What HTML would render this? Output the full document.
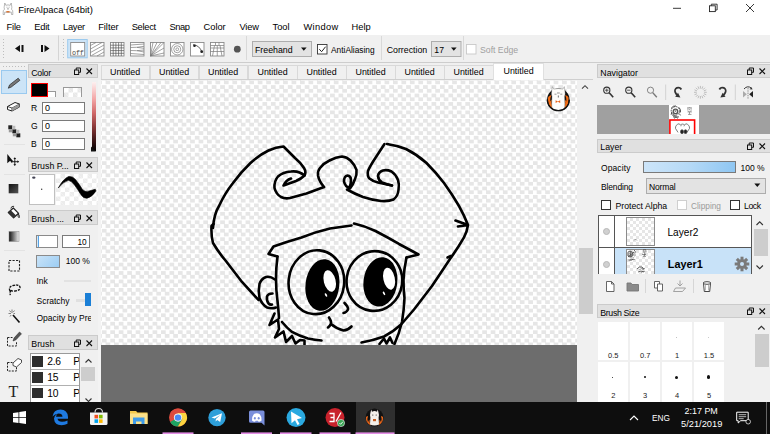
<!DOCTYPE html>
<html><head><meta charset="utf-8"><title>FireAlpaca</title>
<style>
*{box-sizing:border-box;margin:0;padding:0}
html,body{width:770px;height:434px;overflow:hidden;background:#f0f0f0}
body{position:relative;font-family:"Liberation Sans",sans-serif;font-size:8.7px;color:#000;line-height:1}
.a{position:absolute}
.t{position:absolute;white-space:nowrap;line-height:10px}
.hd{position:absolute;height:14.600px;background:#e0e0e0;border:1px solid #cbcbcb}
.inp{position:absolute;background:#fff;border:1px solid #7a7a7a}
.cb{position:absolute;width:10.300px;height:10.300px;background:#fff;border:1px solid #333}
svg{position:absolute;overflow:visible}
</style></head><body>
<!-- title bar -->
<div class="a" id="titlebar" style="left:0;top:0;width:770px;height:18px;background:#fff"></div>
<div class="t" style="left:18.300px;top:5px;font-size:9.450px">FireAlpaca (64bit)</div>
<!-- menu bar -->
<div class="a" id="menubar" style="left:0;top:18px;width:770px;height:16.5px;background:#fff"></div>
<div class="t" style="left:6.5px;top:22.400px;font-size:9.3px;letter-spacing:-0.18px">File</div>
<div class="t" style="left:34.3px;top:22.400px;font-size:9.3px;letter-spacing:-0.22px">Edit</div>
<div class="t" style="left:63.1px;top:22.400px;font-size:9.3px;letter-spacing:-0.3px">Layer</div>
<div class="t" style="left:98.2px;top:22.400px;font-size:9.3px;letter-spacing:-0.03px">Filter</div>
<div class="t" style="left:131.7px;top:22.400px;font-size:9.3px;letter-spacing:-0.28px">Select</div>
<div class="t" style="left:169.4px;top:22.400px;font-size:9.3px;letter-spacing:-0.37px">Snap</div>
<div class="t" style="left:203.5px;top:22.400px;font-size:9.3px;letter-spacing:0px">Color</div>
<div class="t" style="left:239.4px;top:22.400px;font-size:9.3px;letter-spacing:-0.15px">View</div>
<div class="t" style="left:272.6px;top:22.400px;font-size:9.3px;letter-spacing:-0.05px">Tool</div>
<div class="t" style="left:303.5px;top:22.400px;font-size:9.3px;letter-spacing:0.33px">Window</div>
<div class="t" style="left:351.6px;top:22.400px;font-size:9.3px;letter-spacing:-0.05px">Help</div>
<!-- toolbar -->
<div class="a" id="toolbar" style="left:0;top:34.500px;width:770px;height:28.300px;background:#f0f0f0;border-bottom:1px solid #cdcdcd"></div>

<!-- window controls -->
<svg style="left:0;top:0" width="770" height="18" viewBox="0 0 770 18">
 <g fill="none" stroke="#222" stroke-width="0.9">
  <path d="M673 8.300h8"/>
  <rect x="709.500" y="5.800" width="5.800" height="5.800"/><path d="M711.300 5.800v-1.600h5.800v5.800h-1.800"/>
  <path d="M746 4l8 8M754 4l-8 8"/>
 </g>
 <!-- app icon -->
 <g fill="#fff" stroke="#8a8a8a" stroke-width="0.600">
  <path d="M4.800 3l1 2.300q2.200-0.800 4.400 0l1-2.300l0.500 3.200q0.400 1.500-0.200 3l1.200 1.500l0.200 3.800h-1.400l-0.300-2.500q-3.200 1-6.400 0l-0.300 2.500h-1.400l0.200-3.800l1.200-1.500q-0.600-1.500-0.200-3z"/>
  <path d="M6.300 7.200h1.200M8.600 7.200h1.200M7.600 8.300h0.800v1h-0.800z" stroke="#777" stroke-width="0.450" fill="none"/>
 </g>
 <rect x="6.300" y="11" width="3.300" height="1.500" fill="#d9793a"/>
</svg>
<!-- toolbar content -->
<svg style="left:0;top:34px" width="770" height="28" viewBox="0 34 770 28">
 <g fill="#bdbdbd">
  <rect x="3" y="39" width="1" height="1"/><rect x="3" y="42" width="1" height="1"/><rect x="3" y="45" width="1" height="1"/><rect x="3" y="48" width="1" height="1"/><rect x="3" y="51" width="1" height="1"/><rect x="3" y="54" width="1" height="1"/><rect x="3" y="57" width="1" height="1"/>
  <rect x="63" y="39" width="1" height="1"/><rect x="63" y="42" width="1" height="1"/><rect x="63" y="45" width="1" height="1"/><rect x="63" y="48" width="1" height="1"/><rect x="63" y="51" width="1" height="1"/><rect x="63" y="54" width="1" height="1"/><rect x="63" y="57" width="1" height="1"/>
 </g>
 <path d="M58.500 35.500v25" stroke="#d4d4d4" fill="none"/>
 <!-- prev / next -->
 <path d="M15 48.500l5-3.500v7zM21.500 45h2v7h-2z" fill="#111"/>
 <path d="M49.500 48.500l-5-3.500v7zM41 45h2v7h-2z" fill="#111"/>
 <!-- snap off (selected) -->
 <rect x="67.700" y="39.500" width="19.500" height="18.300" fill="#cde4f7" stroke="#9ccaee"/>
 <rect x="70.700" y="42.500" width="14" height="13.500" fill="#fff" stroke="#8a8a8a" stroke-width="0.900"/>
 <text x="72" y="55" font-family="Liberation Mono, monospace" font-size="6.800" letter-spacing="-0.200" fill="#444">off</text>
 <g stroke="#7a7a7a" fill="none" stroke-width="0.700">
  <rect x="90.500" y="42.500" width="13.500" height="13.500" fill="#fff" stroke="#8a8a8a" stroke-width="0.900"/>
  <path d="M90.500 45.500l5.500-3M90.500 49l11.500-6.500M90.500 52.500l13.500-7.500M91.500 55.500l12.500-7M97 56l7-4"/>
  <rect x="110.500" y="42.500" width="13.500" height="13.500" fill="#fff" stroke="#8a8a8a" stroke-width="0.900"/>
  <path d="M113.200 42.500v13.500M115.900 42.500v13.500M118.600 42.500v13.500M121.300 42.500v13.500M110.500 45.200h13.500M110.500 47.900h13.500M110.500 50.600h13.500M110.500 53.300h13.500" stroke="#555"/>
  <rect x="130.500" y="42.500" width="13.500" height="13.500" fill="#fff" stroke="#8a8a8a" stroke-width="0.900"/>
  <path d="M130.500 45l13.500-1M130.500 47.500l6-0.200l7.500 1M130.500 50.500l6 0.200l7.500-0.700M130.500 53.500l13.500 1M137 47.300l7-1M137 50.700l7 1.300"/>
  <rect x="150.500" y="42.500" width="13.500" height="13.500" fill="#fff" stroke="#8a8a8a" stroke-width="0.900"/>
  <path d="M150.500 56l2.500-13.500M150.500 56l6.500-13.500M150.500 56l13.500-13.500M150.500 56l13.500-8M150.500 56l13.500-3M150.500 56l10.500-13.500"/>
  <rect x="170.500" y="42.500" width="13.500" height="13.500" fill="#fff" stroke="#8a8a8a" stroke-width="0.900"/>
  <circle cx="177.250" cy="49.250" r="5.700"/><circle cx="177.250" cy="49.250" r="3.500"/><circle cx="177.250" cy="49.250" r="1.400"/>
  <rect x="190.500" y="42.500" width="13.500" height="13.500" fill="#fff" stroke="#8a8a8a" stroke-width="0.900"/>
  <path d="M193 44.700q6.500 0.500 9 7.500" stroke="#222" stroke-width="0.700"/>
  <rect x="210.500" y="42.500" width="13.500" height="13.500" fill="#fff" stroke="#8a8a8a" stroke-width="0.900"/>
  <path d="M210.500 45.500h13.500M210.500 48h13.500M210.500 51.500h13.500M214.500 45.500l-2 10.500M217.250 45.500v10.500M220 45.500l2 10.500M215.500 42.500v3M219 42.500v3"/>
 </g>
 <circle cx="194.500" cy="45.700" r="1.300" fill="#222"/><circle cx="201.700" cy="51.700" r="1.400" fill="#222"/>
 <circle cx="237.300" cy="49.200" r="3.400" fill="#555"/>
 <path d="M246.500 36v24M381.500 36v24M463.500 36v24" stroke="#d9d9d9" fill="none"/>
 <!-- freehand combo -->
 <rect x="252.500" y="41.500" width="59" height="15" fill="#e3e3e3" stroke="#adadad"/>
 <path d="M301 47.500h5.600l-2.800 3.200z" fill="#111"/>
 <!-- AA checkbox -->
 <rect x="317.500" y="44.500" width="9.500" height="9.500" fill="#fff" stroke="#333" stroke-width="0.9"/>
 <path d="M319.300 49.200l2.300 2.500l4-5" stroke="#222" stroke-width="1" fill="none"/>
 <!-- correction combo -->
 <rect x="431.500" y="41.500" width="29.500" height="15" fill="#e3e3e3" stroke="#adadad"/>
 <path d="M451 47.500h5.600l-2.800 3.200z" fill="#111"/>
 <rect x="466.500" y="44.500" width="9.500" height="9.500" fill="#fff" stroke="#c8c8c8" stroke-width="0.9"/>
</svg>
<div class="t" style="left:255px;top:44.700px;font-size:8.8px">Freehand</div>
<div class="t" style="left:331px;top:45.200px;font-size:8.350px">AntiAliasing</div>
<div class="t" style="left:386.700px;top:45px;font-size:8.8px">Correction</div>
<div class="t" style="left:434.300px;top:45px;font-size:8.7px">17</div>
<div class="t" style="left:480px;top:44.700px;font-size:8.7px;color:#a0a0a0">Soft Edge</div>
<!-- TOOLBAR-CONTENT -->

<svg style="left:0;top:62px" width="29" height="345" viewBox="0 62 29 345">
 <g fill="#bdbdbd"><rect x="3" y="66" width="1" height="1"/><rect x="6" y="66" width="1" height="1"/><rect x="9" y="66" width="1" height="1"/><rect x="12" y="66" width="1" height="1"/><rect x="15" y="66" width="1" height="1"/><rect x="18" y="66" width="1" height="1"/><rect x="21" y="66" width="1" height="1"/><rect x="24" y="66" width="1" height="1"/></g>
 <rect x="1.500" y="70.500" width="25" height="23" fill="#cce4f7" stroke="#99c9ef"/>
 <!-- pencil -->
 <path d="M8.300 88.200l1.300-3.300l8.600-6.700l1.700 2.100l-8.600 6.700z" fill="#777" stroke="#222" stroke-width="0.700" stroke-linejoin="round"/>
 <!-- eraser -->
 <path d="M7.500 106.500l7.500-4l4.500 1.500v3l-7.500 4l-4.500-1.500z" fill="#fff" stroke="#222" stroke-width="1"/>
 <path d="M7.500 106.500l4.500 1.500l7.500-4M12 108v3" fill="none" stroke="#222" stroke-width="0.800"/><path d="M12 108l7.500-4v3l-7.500 4z" fill="#999"/>
 <!-- dot tool -->
 <g fill="#222"><rect x="8.300" y="125.300" width="4" height="4"/><rect x="12.300" y="129.300" width="4" height="4"/><rect x="16.300" y="133.300" width="4" height="4"/><rect x="12.300" y="125.800" width="3" height="3.500" fill="#bbb"/><rect x="16.300" y="129.800" width="3" height="3.500" fill="#bbb"/><rect x="8.800" y="129.300" width="3.500" height="3" fill="#999"/><rect x="12.800" y="133.300" width="3.500" height="3" fill="#999"/></g>
 <path d="M4 144.500h21M4 174.500h21M4 250.500h21" stroke="#e3e3e3" fill="none"/>
 <!-- move -->
 <path d="M7.300 154v9.300l2.600-2.200l3.400 0.400z" fill="#111"/>
 <path d="M14.800 158.500v6.500M11.500 161.700h6.600" stroke="#111" stroke-width="0.900" fill="none"/>
 <path d="M14.800 157.300l1.400 1.800h-2.800zM14.800 166.100l1.400-1.800h-2.800zM10.400 161.700l1.800-1.400v2.800zM19.200 161.700l-1.800-1.400v2.800z" fill="#111"/>
 <!-- fill rect -->
 <defs><linearGradient id="g1" x1="0" y1="0" x2="1" y2="1"><stop offset="0" stop-color="#111"/><stop offset="1" stop-color="#555"/></linearGradient>
 <linearGradient id="g2" x1="0" y1="0" x2="1" y2="0"><stop offset="0" stop-color="#111"/><stop offset="1" stop-color="#eee"/></linearGradient></defs>
 <rect x="8.700" y="184" width="9.600" height="9.300" fill="url(#g1)"/>
 <!-- bucket -->
 <path d="M8.300 212.500l5-4.500l5.300 5.300l-5 4.500z" fill="#fff" stroke="#222" stroke-width="1.200" stroke-linejoin="round"/><path d="M8.300 212.500l5.300 5.300l2.500-2.300l-5.300-5.300z" fill="#333"/>
 <path d="M10.800 208.500q0.500-2.800 3.300-2.200M18.300 213.800q1.800 2 0.800 4q-1.800-1-0.800-4z" fill="none" stroke="#222" stroke-width="0.900"/>
 <!-- gradient -->
 <rect x="9" y="231.500" width="10" height="10" fill="url(#g2)" stroke="#888" stroke-width="0.500"/>
 <!-- select rect -->
 <rect x="9" y="260.500" width="10.500" height="10.500" fill="none" stroke="#222" stroke-width="1.100" stroke-dasharray="2.200 1.300"/>
 <!-- lasso -->
 <path d="M10 291q-2-4 3-5.500q6-1.500 7 1.500q0.500 3.500-5 4q-3 0.500-4.500-1M11 290.500q-2 2.500-0.500 4.500" fill="none" stroke="#111" stroke-width="1.300" stroke-dasharray="2.400 1"/>
 <!-- wand -->
 <path d="M13 315l6.500 7.500" stroke="#111" stroke-width="1.600" fill="none"/>
 <path d="M12 309.500v3.500M8.500 313.500h2.500M15 313.500h-1.500M9.500 310.500l1.500 1.800M14.500 310.500l-1.300 1.600M10 316.500l1.200-1.500" stroke="#666" stroke-width="0.800" fill="none"/>
 <!-- select pen -->
 <path d="M7.500 337.500h5M7.500 337.500v8.500h9v-4" fill="none" stroke="#222" stroke-width="1" stroke-dasharray="2 1.200"/>
 <path d="M13 341l1-3l5.500-6l2 1.800l-5.500 6z" fill="#555" stroke="#222" stroke-width="0.500"/>
 <!-- select eraser -->
 <path d="M7.500 362.500h5M7.500 362.500v8.500h9v-4" fill="none" stroke="#222" stroke-width="1" stroke-dasharray="2 1.200"/>
 <path d="M13 363l5-4.500l3.500 1.500v2.500l-5 4.500l-3.500-1.500z" fill="#fff" stroke="#222" stroke-width="0.800"/>
 <text x="8.500" y="396.800" font-family="Liberation Serif, serif" font-size="16" fill="#222">T</text>
</svg>
<!-- LEFT-TOOLS -->
<div class="hd" style="left:28.300px;top:63.8px;width:69.600px"></div>
<div class="t" style="left:31.300px;top:67.5px;font-size:8.8px;letter-spacing:-0.3px">Color</div>
<svg style="left:74px;top:67.2px" width="20" height="9" viewBox="0 0 20 9"><g fill="none" stroke="#111" stroke-width="1"><rect x="0.500" y="3" width="4.200" height="4.500"/><path d="M2.200 3v-2h4.300v4.300h-1.800"/><path d="M12.500 1.500l5.500 5.500M18 1.500l-5.500 5.500" stroke-width="1.100"/></g></svg>

<div class="a" style="left:48px;top:90.500px;width:7.500px;height:6.500px;background:#fff;border:1px solid #999;border-left:0;border-bottom:0"></div>
<div class="a" style="left:31px;top:83.300px;width:17.300px;height:13.500px;background:#000;border:1.300px solid #f00"></div>
<div class="a" style="left:63px;top:86.500px;width:18.500px;height:10.500px;border:1px solid #999;border-bottom:0;background:#fff;background-image:linear-gradient(45deg,#e8e8e8 25%,transparent 25%,transparent 75%,#e8e8e8 75%),linear-gradient(45deg,#e8e8e8 25%,transparent 25%,transparent 75%,#e8e8e8 75%);background-size:9px 9px;background-position:0 0,4.500px 4.500px"></div>
<div class="a" style="left:91.500px;top:82px;width:4.500px;height:69px;background:linear-gradient(#fdf0f0 0%,#f3a5a5 25%,#d06868 45%,#8a3838 65%,#3a1515 85%,#000 100%)"></div>
<svg style="left:90px;top:146px" width="7" height="6" viewBox="0 0 7 6"><path d="M1 0.500v5h5z" fill="#111"/></svg>
<div class="t" style="left:31px;top:103px;font-size:8.600px">R</div>
<div class="t" style="left:31px;top:120.500px;font-size:8.600px">G</div>
<div class="t" style="left:31px;top:138.500px;font-size:8.600px">B</div>
<div class="inp" style="left:41.500px;top:102px;width:43.500px;height:12px"></div>
<div class="inp" style="left:41.500px;top:119.500px;width:43.500px;height:12px"></div>
<div class="inp" style="left:41.500px;top:137.500px;width:43.500px;height:12px"></div>
<div class="t" style="left:45px;top:103px;font-size:9px">0</div>
<div class="t" style="left:45px;top:120.500px;font-size:9px">0</div>
<div class="t" style="left:45px;top:138.500px;font-size:9px">0</div>
<div class="hd" style="left:28.300px;top:157.2px;width:69.600px"></div>
<div class="t" style="left:31.300px;top:160.9px;font-size:8.8px">Brush P...</div>
<svg style="left:74px;top:160.6px" width="20" height="9" viewBox="0 0 20 9"><g fill="none" stroke="#111" stroke-width="1"><rect x="0.500" y="3" width="4.200" height="4.500"/><path d="M2.200 3v-2h4.300v4.300h-1.800"/><path d="M12.500 1.500l5.500 5.500M18 1.500l-5.500 5.500" stroke-width="1.100"/></g></svg>

<div class="a" style="left:29px;top:173.500px;width:26px;height:31.500px;background:#fff;border:1px solid #c0c0c0"></div>
<div class="a" style="left:56px;top:173.500px;width:41.500px;height:31.500px;background:#fff;background-image:linear-gradient(45deg,#ececec 25%,transparent 25%,transparent 75%,#ececec 75%),linear-gradient(45deg,#ececec 25%,transparent 25%,transparent 75%,#ececec 75%);background-size:9px 9px;background-position:0 0,4.500px 4.500px"></div>
<svg style="left:29px;top:173px;overflow:hidden" width="69" height="33" viewBox="29 173 69 33">
 <ellipse cx="33.800" cy="177.600" rx="1.700" ry="1.200" fill="#445"/><circle cx="41.700" cy="189.300" r="0.700" fill="#333"/>
 <path d="M58.300 188Q63 179 68.500 176.500Q72.500 175.800 75.500 179.500Q79.500 184.500 82.500 189.500Q85 192.500 89 191L95.200 189.300Q96.300 189.800 95.700 191.500Q92 197 87 198.300Q83.500 198.500 81 194.800Q77.500 189 74.500 185Q71.500 181 68.500 180.300Q63.500 181.500 58.300 188z" fill="#000" stroke="#000" stroke-width="0.600" stroke-linejoin="round"/>
</svg>
<div class="hd" style="left:28.300px;top:210.2px;width:69.600px"></div>
<div class="t" style="left:31.300px;top:213.9px;font-size:8.8px">Brush ...</div>
<svg style="left:74px;top:213.6px" width="20" height="9" viewBox="0 0 20 9"><g fill="none" stroke="#111" stroke-width="1"><rect x="0.500" y="3" width="4.200" height="4.500"/><path d="M2.200 3v-2h4.300v4.300h-1.800"/><path d="M12.500 1.500l5.500 5.500M18 1.500l-5.500 5.500" stroke-width="1.100"/></g></svg>

<div class="a" style="left:35.500px;top:235.200px;width:22.500px;height:12.800px;background:#fff;border:1px solid #8a8a8a"></div>
<div class="a" style="left:36.500px;top:236.200px;width:2.800px;height:10.800px;background:linear-gradient(90deg,#d5e9fa 60%,#55a3e6 60%)"></div>
<div class="inp" style="left:62.200px;top:235.200px;width:28px;height:12.800px"></div>
<div class="t" style="left:77.500px;top:237px;font-size:8.300px">10</div>
<div class="a" style="left:35.500px;top:255px;width:24.700px;height:12.800px;background:linear-gradient(135deg,#c9e3f8,#9ccdf3);border:1px solid #8a8a8a"></div>
<div class="t" style="left:65.800px;top:255.700px;font-size:8.500px">100 %</div>
<div class="t" style="left:36.500px;top:276px;font-size:8.500px">Ink</div>
<div class="a" style="left:63.500px;top:280px;width:27px;height:1.500px;background:#e2e2e2"></div>
<div class="t" style="left:36.500px;top:296px;font-size:8.500px">Scratchy</div>
<div class="a" style="left:75.500px;top:299px;width:9.500px;height:2.500px;background:#e0e0e0"></div>
<div class="a" style="left:84.500px;top:292.500px;width:6px;height:13.500px;background:#1a7fd6"></div>
<div class="a" style="left:36.500px;top:312.500px;width:54px;height:12px;overflow:hidden"><div class="t" style="left:0;top:0;font-size:8.500px">Opacity by Pressure</div></div>
<div class="hd" style="left:28.300px;top:335.1px;width:69.600px"></div>
<div class="t" style="left:31.300px;top:338.8px;font-size:8.8px">Brush</div>
<svg style="left:74px;top:338.5px" width="20" height="9" viewBox="0 0 20 9"><g fill="none" stroke="#111" stroke-width="1"><rect x="0.500" y="3" width="4.200" height="4.500"/><path d="M2.200 3v-2h4.300v4.300h-1.800"/><path d="M12.500 1.500l5.500 5.500M18 1.500l-5.500 5.500" stroke-width="1.100"/></g></svg>

<div class="a" style="left:29.700px;top:352.500px;width:50.200px;height:50px;background:#fff;border:1px solid #9a9a9a;border-bottom:0"></div>
<div class="a" style="left:30.700px;top:369px;width:48.200px;height:1px;background:#b0b0b0"></div>
<div class="a" style="left:30.700px;top:385px;width:48.200px;height:1px;background:#b0b0b0"></div>
<div class="a" style="left:32.200px;top:356.200px;width:10.600px;height:10.600px;background:#2e2e2e"></div>
<div class="a" style="left:32.200px;top:372px;width:10.600px;height:10.600px;background:#2e2e2e"></div>
<div class="a" style="left:32.200px;top:387.800px;width:10.600px;height:10.600px;background:#2e2e2e"></div>
<div class="t" style="left:47.300px;top:357.300px;font-size:10.300px;letter-spacing:-0.3px">2.6</div>
<div class="t" style="left:47.300px;top:373.100px;font-size:10.300px;letter-spacing:-0.3px">15</div>
<div class="t" style="left:47.300px;top:388.900px;font-size:10.300px;letter-spacing:-0.3px">10</div>
<div class="a" style="left:72px;top:353.500px;width:7px;height:49px;overflow:hidden"><div class="t" style="left:1.300px;top:3.800px;font-size:10.300px">Pe</div><div class="t" style="left:1.300px;top:19.600px;font-size:10.300px">Pe</div><div class="t" style="left:1.300px;top:35.400px;font-size:10.300px">Pe</div></div>
<div class="a" style="left:80.800px;top:367.300px;width:14.300px;height:14.200px;background:#cdcdcd"></div>
<svg style="left:80px;top:353px" width="18" height="54" viewBox="80 353 18 54"><g fill="none" stroke="#333" stroke-width="1.100"><path d="M85.500 362.500l3-3l3 3"/><path d="M85.500 398.500l3 3l3-3"/></g></svg>
<!-- LEFT-PANELS -->
<div class="a" style="left:100.5px;top:64.500px;width:49.500px;height:16px;background:#f0f0f0;border:1px solid #d9d9d9;border-bottom:0"></div><div class="t" style="left:110.0px;top:66.800px;font-size:8.900px">Untitled</div>
<div class="a" style="left:149.5px;top:64.500px;width:49.500px;height:16px;background:#f0f0f0;border:1px solid #d9d9d9;border-bottom:0"></div><div class="t" style="left:159.0px;top:66.800px;font-size:8.900px">Untitled</div>
<div class="a" style="left:198.5px;top:64.500px;width:49.500px;height:16px;background:#f0f0f0;border:1px solid #d9d9d9;border-bottom:0"></div><div class="t" style="left:208.0px;top:66.800px;font-size:8.900px">Untitled</div>
<div class="a" style="left:248px;top:64.500px;width:49.500px;height:16px;background:#f0f0f0;border:1px solid #d9d9d9;border-bottom:0"></div><div class="t" style="left:257.5px;top:66.800px;font-size:8.900px">Untitled</div>
<div class="a" style="left:297px;top:64.500px;width:49.500px;height:16px;background:#f0f0f0;border:1px solid #d9d9d9;border-bottom:0"></div><div class="t" style="left:306.5px;top:66.800px;font-size:8.900px">Untitled</div>
<div class="a" style="left:346px;top:64.500px;width:49.500px;height:16px;background:#f0f0f0;border:1px solid #d9d9d9;border-bottom:0"></div><div class="t" style="left:355.5px;top:66.800px;font-size:8.900px">Untitled</div>
<div class="a" style="left:395px;top:64.500px;width:49.500px;height:16px;background:#f0f0f0;border:1px solid #d9d9d9;border-bottom:0"></div><div class="t" style="left:404.5px;top:66.800px;font-size:8.900px">Untitled</div>
<div class="a" style="left:444px;top:64.500px;width:49.500px;height:16px;background:#f0f0f0;border:1px solid #d9d9d9;border-bottom:0"></div><div class="t" style="left:453.5px;top:66.800px;font-size:8.900px">Untitled</div>
<div class="a" style="left:101px;top:78.800px;width:492px;height:1.300px;background:#cfcfcf"></div>
<div class="a" style="left:493px;top:63px;width:51px;height:18px;background:#fff;border:1px solid #e0e0e0;border-bottom:0"></div><div class="t" style="left:503.500px;top:66px;font-size:8.900px">Untitled</div>
<!-- TABS -->

<div class="a" style="left:97.500px;top:80px;width:4px;height:323px;background:#f3f3f3"></div>
<div class="a" id="canvas" style="left:101px;top:80.300px;width:476.600px;height:265px;overflow:hidden;background:#f5f5f5"><div class="a" style="left:-8.460px;top:-8.460px;width:500px;height:290px;filter:blur(0.700px);background:repeating-conic-gradient(#e6e6e6 0% 25%,#ffffff 0% 50%) 0.400px 0/8.460px 8.460px"></div></div>
<div class="a" style="left:101px;top:345.200px;width:476.600px;height:57.500px;background:#6d6d6d"></div>
<svg style="left:98px;top:81px;overflow:hidden" width="480" height="264.200" viewBox="98 81 480 264.200">
<g fill="none" stroke="#000" stroke-width="2.600" stroke-linecap="round" stroke-linejoin="round">

<!-- hat left outline + curl -->
<path d="M213.500 224L211.500 226Q211 236 213 243Q219 253 225.500 260.500L242 282L258.500 300"/>
<path d="M213 228Q214 214 219 206Q225 193 233 183Q241 172 250.500 163Q259 155 268.500 150.500Q276 147 283.500 146.500L295 158Q301 163 304 168Q306.500 172 304.500 175.500Q301 179 296 181L283.500 185.500Q286 180 291 178.500"/>
<path d="M304.500 175.500Q299 170.500 291 171.500Q283 172 278 176.500Q274 181 274.500 188Q276 194 281 197Q285 199 290 198L306.500 193.500L324 187"/>
<path d="M324 187Q319 181 318 175.500Q317.500 171 320 168Q324 163 329.500 160.500Q336 157 342 156.500Q347 157 350.500 160.500Q355 165 356.500 170Q357 175 355 179Q353 185 350 188.500Q345 186.500 344 181.500Q344 176 347.500 175.500Q351 176 351 180Q351 185 349 188.500"/>
<path d="M347 189.500Q355 194 363 197Q372 200 381 201Q389 201.500 393.500 199.500Q398 196 398.500 190Q399.500 184 398 180Q396 174.500 391.500 171.500Q387 169.500 383 170.500Q378.500 172 378 176Q378.500 180.500 382 182.500Q387 184.500 392 185.500"/>
<path d="M384.500 144L376 157Q370 166 368 171Q367 176 369.500 178.500Q373 181.500 378 182.500L392 185.500"/>
<path d="M387 144Q397 145.500 406 149Q417 154.500 426.500 163Q436 172.500 444 183Q452 194 459 206Q464 215 468 225L455.500 220.500M468 225L458 226.500M468 225Q467 232 464 237.500Q458 248 450 259L432 286L414 309.500L402 323.500"/>
<path d="M447.500 257.500l3.500-1.500"/>
<!-- brim -->
<path d="M351.500 225.500L330 228.500Q315 232 301.500 237.500Q286 242 273.500 246.500L268.500 254L277.500 256.500"/>
<path d="M354 223.500Q365 226 375.500 231Q388 237.500 399 244L418.500 254.500L406.500 257.500"/>
<!-- face sides -->
<path d="M277.500 256.500Q276 268 276 278.500Q276 290 277.500 301Q278.500 310 279 318"/>
<path d="M406.500 257.500Q404 269 403.500 280Q403.500 290 404.500 298Q404 310 402 322Q399 334 394.500 344"/>
<!-- ear -->
<path d="M275 279.500Q270 276 266 277Q261 279 259.500 284Q258 291 259.500 298Q262 304.500 267 307.500Q272 309 276 307.500"/>
<path d="M272.500 293.500Q268 293.500 267 296.500Q266.500 301 268.500 303.500Q270 305 272 304.500"/>
<!-- hair zigzag -->
<path d="M274.500 313.500L269.500 325L278 319.500L279 329L275 337.500L283.500 331.500L286 342L292 336L295.500 343.500L300 340L304.500 340.500L304.500 345"/>
<path d="M282 322Q287 328 292 332Q299 336 308 338.500Q315 340 321.500 340.500"/>
<!-- jaw right -->
<path d="M361.500 342.500Q373 340.500 384 336.500Q393 332 400.500 325"/>
<path d="M379.500 344L384 338.500L386.500 343.500L390 337.500L392.500 343"/>
<!-- eyes -->
<ellipse cx="316.400" cy="282.200" rx="27.800" ry="32" transform="rotate(6 316.400 282.200)"/>
<ellipse cx="374.400" cy="281" rx="27.800" ry="29.900" transform="rotate(8 374.400 281)"/>
<ellipse cx="322.400" cy="285" rx="15.600" ry="24.600" transform="rotate(7 322.400 285)" fill="#000"/>
<ellipse cx="380.400" cy="281.900" rx="15.600" ry="23.500" transform="rotate(7 380.400 281.900)" fill="#000"/>
<ellipse cx="329.700" cy="281" rx="5.900" ry="11" transform="rotate(-14 329.700 281)" fill="#fff" stroke="none"/>
<ellipse cx="389.100" cy="278.700" rx="5.700" ry="11.200" transform="rotate(-12 389.100 278.700)" fill="#fff" stroke="none"/>
<ellipse cx="326" cy="295" rx="0.900" ry="2" transform="rotate(-30 326 295)" fill="#fff" stroke="none"/>
<ellipse cx="384" cy="293.400" rx="0.900" ry="2" transform="rotate(-30 384 293.400)" fill="#fff" stroke="none"/>
<!-- nose + smile -->
<path d="M344.500 303Q348.500 307 348 309.500Q346.500 312.500 343.500 313"/>
<path d="M329 317.500Q331.500 321 331 323.500Q330 326 328 327.500M331 324Q336 328.500 343.500 330.500Q348 330 351.500 326.500"/>
<!-- DRAWING -->
</g>
</svg>

<svg style="left:545px;top:85px" width="27" height="28" viewBox="545 85 27 28">
 <circle cx="558.300" cy="99.700" r="11.300" fill="#111"/>
 <path d="M548.200 97q-1 5 1.800 9.500q2 3 5.200 4q-2-3.500-1.800-7.500q-1 1-1.200 2.500q-1.300-3-0.300-6q-1 0.800-1.700 2q-0.300-3.500 1.300-6.500q-2 0.500-3.300 2zM568.400 97q1 5-1.800 9.500q-2 3-5.200 4q2-3.500 1.800-7.500q1 1 1.200 2.500q1.300-3 0.300-6q1 0.800 1.700 2q0.300-3.500-1.300-6.500q2 0.500 3.300 2z" fill="#f26c14"/>
 <path d="M552.300 86.600l1.400 2.500q4.600-1.200 9.200 0l1.400-2.500l0.600 4.400q0.700 2.500-0.300 5.500l0.300 7q0.300 4-1.200 6.400q-5.400 1.800-10.800 0q-1.500-2.400-1.200-6.400l0.300-7q-1-3-0.300-5.500z" fill="#fdfdfb" stroke="#555" stroke-width="0.350"/>
 <circle cx="558.300" cy="99.700" r="11" fill="none" stroke="#111" stroke-width="1.300" stroke-dasharray="34.5 34.7"/>
 <path d="M554.500 94.200h2M560.300 94.200h2M557 93l2.800 0" stroke="#333" stroke-width="0.500" fill="none"/>
 <path d="M557.800 95.500h1.200v2h-1.200z" fill="#888"/>
 <path d="M555.600 100.200l2.300 1.200l2.300-1.200v2.800l-2.300-1.200l-2.300 1.200z" fill="#e8641a"/>
</svg>
<!-- canvas scrollbar -->
<div class="a" style="left:577.300px;top:80px;width:16px;height:323px;background:#f0f0f0"></div>
<div class="a" style="left:579px;top:247.700px;width:13.500px;height:66.800px;background:#cdcdcd"></div>
<svg style="left:578px;top:81px" width="15" height="15" viewBox="578 81 15 15"><path d="M582 88.700l3-3l3 3" fill="none" stroke="#444" stroke-width="1.100"/></svg>
<!-- CANVAS -->
<div class="hd" style="left:597px;top:63.8px;width:173.5px"></div>
<div class="t" style="left:600.300px;top:67.5px;font-size:8.8px">Navigator</div>
<svg style="left:746.6px;top:67.2px" width="20" height="9" viewBox="0 0 20 9"><g fill="none" stroke="#111" stroke-width="1"><rect x="0.500" y="3" width="4.200" height="4.500"/><path d="M2.200 3v-2h4.300v4.300h-1.800"/><path d="M12.500 1.500l5.500 5.500M18 1.500l-5.500 5.500" stroke-width="1.100"/></g></svg>

<svg style="left:597px;top:80px" width="173" height="26" viewBox="597 80 173 26">
 <g fill="none" stroke="#333" stroke-width="1.100">
  <circle cx="606.800" cy="90.200" r="3.100"/><path d="M609.200 92.800l4 4.500" stroke-width="1.600"/><path d="M605.100 90.200h3.400M606.800 88.500v3.400" stroke-width="0.800"/>
  <circle cx="628.800" cy="90.200" r="3.100"/><path d="M631.200 92.800l4 4.500" stroke-width="1.600"/><path d="M627.100 90.200h3.400" stroke-width="0.800"/>
  <circle cx="650.500" cy="90.200" r="3.100" stroke="#777" stroke-width="0.900"/><path d="M652.800 92.800l4 4.500" stroke-width="1.300" stroke="#777"/>
  <path d="M665.700 84.500v15.500M735.300 84.500v15.500" stroke="#d2d2d2" stroke-width="1"/>
  <path d="M681.300 89.500a3.300 3.300 0 0 0 -6 2.800q0.800 2 2.500 3" stroke-width="1.800"/>
  <path d="M675.200 96.700l5.200 0.800l-2.400-4.800z" fill="#333" stroke="none"/>
  <path d="M719.400 89.500a3.300 3.300 0 0 1 6 2.800q-0.800 2 -2.500 3" stroke-width="1.800"/>
  <path d="M725.500 96.700l-5.200 0.800l2.400-4.800z" fill="#333" stroke="none"/>
 </g>
 <path d="M704.10 92.30L706.80 92.30M703.82 93.72L706.31 94.75M703.02 94.92L704.93 96.83M701.82 95.72L702.85 98.21M700.40 96.00L700.40 98.70M698.98 95.72L697.95 98.21M697.78 94.92L695.87 96.83M696.98 93.72L694.49 94.75M696.70 92.30L694.00 92.30M696.98 90.88L694.49 89.85M697.78 89.68L695.87 87.77M698.98 88.88L697.95 86.39M700.40 88.60L700.40 85.90M701.82 88.88L702.85 86.39M703.02 89.68L704.93 87.77M703.82 90.88L706.31 89.85" stroke="#b0b0b0" stroke-width="0.800" fill="none"/>
 <path d="M743 91v6.500l3.800-3.250z" fill="#aaa"/><path d="M753 91v6.500l-3.800-3.250z" fill="#222"/>
 <path d="M748 88v11" stroke="#666" stroke-width="0.700" stroke-dasharray="1.400 0.900" fill="none"/>
 <path d="M744 89q3.500-4 7.500-0.800" stroke="#333" stroke-width="1" fill="none"/><path d="M752.500 89.500l-3-0.300l2.200-2z" fill="#333"/>
</svg>
<div class="a" style="left:597.200px;top:104.600px;width:172.800px;height:29px;background:#a0a0a0"></div>
<div class="a" style="left:668.900px;top:104.600px;width:30px;height:29px;background:#fff"></div>
<svg style="left:668px;top:104.600px;overflow:hidden" width="32" height="29" viewBox="668 104.600 32 29">
 <g fill="none" stroke="#333" stroke-width="0.900">
  <circle cx="675.500" cy="110.500" r="4.300" stroke-dasharray="1.800 0.700"/><circle cx="675.500" cy="111" r="2.300" stroke="#555" stroke-width="1.300"/>
  <path d="M671 108q2-3 5-2.500M679 107q2 2 1.500 5M671.500 114q2 2 4 1.500M673 116.500h6M674 118l2-1.500l2 1.500M672 112l-1 2M679.500 113.500l1 1.500" stroke-width="0.800"/>
  <path d="M674.500 109.500l2 2.500M676.500 109.500l-2 2.500" stroke="#666" stroke-width="0.700"/>
 </g>
 <g fill="none" stroke="#777" stroke-width="0.700">
  <circle cx="689.500" cy="109.200" r="2" stroke-dasharray="1 0.600"/><path d="M687 107.500h5M687.500 111.500h4.500M689.500 111.500v2.500M688 114h3.500M688.500 109l2 0.500"/>
 </g>
 <rect x="669.900" y="119.600" width="24.700" height="16" fill="#fff" stroke="#f00" stroke-width="1.600"/>
 <g fill="none" stroke="#444" stroke-width="0.700"><path d="M675.500 128q-0.300-3.500 3.500-4.700q1 1.200 1.700 1.200q0.800-0.800 1.800-0.800q1 0 1.800 0.800q0.700 0 1.700-1.200q3.800 1.200 3.500 4.700l-2.500 4M675.500 128l2.500 4"/><path d="M680.500 125.500q0.700-0.800 1.400 0M683.500 125.500q0.700-0.800 1.400 0" stroke-width="0.500"/><ellipse cx="682" cy="131.300" rx="1.500" ry="2" fill="#222"/><ellipse cx="685.500" cy="131.300" rx="1.500" ry="2" fill="#222"/></g>
</svg>
<div class="hd" style="left:597px;top:138.6px;width:173.5px"></div>
<div class="t" style="left:600.300px;top:142.3px;font-size:8.8px">Layer</div>
<svg style="left:746.6px;top:142.0px" width="20" height="9" viewBox="0 0 20 9"><g fill="none" stroke="#111" stroke-width="1"><rect x="0.500" y="3" width="4.200" height="4.500"/><path d="M2.200 3v-2h4.300v4.300h-1.800"/><path d="M12.500 1.500l5.500 5.500M18 1.500l-5.500 5.500" stroke-width="1.100"/></g></svg>

<div class="t" style="left:601px;top:162.500px;font-size:8.500px;letter-spacing:0.1px">Opacity</div>
<div class="a" style="left:643px;top:160.500px;width:92.500px;height:12.500px;background:linear-gradient(100deg,#cde5f9,#b5d9f6 50%,#8ec6f2);border:1px solid #7a7a7a"></div>
<div class="t" style="left:740.500px;top:162.500px;font-size:8.500px">100 %</div>
<div class="t" style="left:601px;top:181.500px;font-size:8.500px;letter-spacing:-0.15px">Blending</div>
<div class="a" style="left:646px;top:178px;width:119.500px;height:15.500px;background:#e3e3e3;border:1px solid #adadad"></div>
<div class="t" style="left:649px;top:181.500px;font-size:8.500px;letter-spacing:-0.15px">Normal</div>
<svg style="left:754px;top:183px" width="7" height="5" viewBox="0 0 7 5"><path d="M0.300 0.500h6l-3 3.500z" fill="#111"/></svg>
<div class="cb" style="left:601.200px;top:200.100px"></div>
<div class="t" style="left:615.500px;top:201px;font-size:8.700px">Protect Alpha</div>
<div class="cb" style="left:676.800px;top:200.100px;border-color:#cfcfcf"></div>
<div class="t" style="left:691px;top:201px;font-size:8.300px;color:#9a9a9a">Clipping</div>
<div class="cb" style="left:730.200px;top:200.100px"></div>
<div class="t" style="left:744px;top:201px;font-size:8.700px;letter-spacing:-0.4px">Lock</div>
<!-- layer list -->
<div class="a" style="left:598.200px;top:215.200px;width:153.800px;height:58.800px;background:#fff;border:1px solid #555;border-bottom:0"></div>
<div class="a" style="left:614.500px;top:248px;width:136.700px;height:26px;background:#c8e2f8"></div>
<div class="a" style="left:599px;top:247px;width:152.500px;height:1px;background:#555"></div>
<div class="a" style="left:613.500px;top:216px;width:1px;height:58px;background:#555"></div>
<div class="a" style="left:603px;top:227.500px;width:7px;height:7px;border-radius:50%;background:#d0d0d0;border:1px solid #b8b8b8"></div>
<div class="a" style="left:603px;top:260.500px;width:7px;height:7px;border-radius:50%;background:#d0d0d0;border:1px solid #b8b8b8"></div>
<div class="a" style="left:625.800px;top:217.200px;width:29px;height:28.500px;border:1px solid #8c8c8c;background-color:#fff;background-image:linear-gradient(45deg,#e6e6e6 25%,transparent 25%,transparent 75%,#e6e6e6 75%),linear-gradient(45deg,#e6e6e6 25%,transparent 25%,transparent 75%,#e6e6e6 75%);background-size:6px 6px;background-position:0 0,3px 3px"></div>
<div class="a" style="left:625.800px;top:249px;width:29px;height:25px;border:1px solid #8c8c8c;border-bottom:0;background-color:#fff;background-image:linear-gradient(45deg,#e6e6e6 25%,transparent 25%,transparent 75%,#e6e6e6 75%),linear-gradient(45deg,#e6e6e6 25%,transparent 25%,transparent 75%,#e6e6e6 75%);background-size:6px 6px;background-position:0 0,3px 3px"></div>
<svg style="left:625px;top:217px;overflow:hidden" width="30" height="57" viewBox="625 217 30 57"><g fill="none" stroke="#777" stroke-width="0.700"><path d="M634 240.500l1.500-1.500l1.500 1.500"/><circle cx="632" cy="255" r="3" stroke-dasharray="1.300 0.800"/><circle cx="632" cy="255" r="1.200"/><path d="M630 259.500h5M644.500 253v3M643 252h3.500M643 256.500h3M639 270q3-2.500 6-1.500M641 272.500q2-1.500 4-1"/><path d="M628 252q2-2 4 0q2 2 0 4q-2 2-4 0zM630 251l1 6M628 257l6-5M634 250q2 1 1 3M628.500 260q3 1 5-1M643 250q2-1 3 0M642 254q2 2 4 0M637 269q2-3 5-2q2 1 1 3M638 272q3-2 6 0" stroke="#444" stroke-width="0.800"/><circle cx="644.700" cy="251" r="1.300" stroke-dasharray="1 0.600"/></g></svg>
<div class="t" style="left:667.500px;top:226.500px;font-size:10.100px;line-height:12px">Layer2</div>
<div class="t" style="left:667.800px;top:257.600px;font-size:10.850px;line-height:12px;font-weight:bold">Layer1</div>
<svg style="left:734px;top:256px" width="16" height="16" viewBox="-8 -8 16 16"><g fill="#7a7a7a"><circle r="4.800"/><g><rect x="-1.500" y="-7.300" width="3" height="14.600"/><rect x="-7.300" y="-1.500" width="14.600" height="3"/></g><g transform="rotate(45)"><rect x="-1.500" y="-7.300" width="3" height="14.600"/><rect x="-7.300" y="-1.500" width="14.600" height="3"/></g></g><circle r="2" fill="#c8e2f8"/></svg>
<!-- layer scrollbar -->
<div class="a" style="left:754.200px;top:229.300px;width:13.500px;height:26.700px;background:#cdcdcd"></div>
<svg style="left:752px;top:215px" width="18" height="60" viewBox="752 215 18 60"><g fill="none" stroke="#333" stroke-width="1.100"><path d="M756.500 225l3.200-3.200l3.200 3.200"/><path d="M756.500 265.500l3.200 3.200l3.200-3.200"/></g></svg>
<!-- layer toolbar -->
<svg style="left:597px;top:276px" width="173" height="22" viewBox="597 276 173 22">
 <g fill="none" stroke="#555" stroke-width="0.900">
  <path d="M606.500 281.500h5l2.500 2.500v7.500h-7.500z" fill="#fff"/><path d="M611.500 281.500v2.500h2.500"/>
  <path d="M627 283h4l1 1.500h6.500v6.500h-11.500z" fill="#8a8a8a" stroke="#777"/>
  <path d="M645.500 279v14M693.500 279v14" stroke="#d2d2d2"/>
  <path d="M654.500 281.500h5v6.500h-5z" fill="#fff"/><path d="M657.500 284h5v7h-5z" fill="#fff"/>
  <path d="M680 280.500v5M677.500 283.500l2.500 2.500l2.500-2.500M675.500 288h10l-3 3.500h-9z" stroke="#999"/>
  <path d="M703.500 283.500h7l-0.800 8h-5.400z" fill="#fff" stroke="#333"/><ellipse cx="707" cy="283" rx="3.800" ry="1.300" fill="#fff" stroke="#333"/><path d="M705.500 285v5.500M708.500 285v5.500" stroke="#888" stroke-width="0.600"/>
 </g>
</svg>
<div class="hd" style="left:597px;top:303.8px;width:173.5px"></div>
<div class="t" style="left:600.300px;top:307.5px;font-size:8.8px;letter-spacing:-0.36px">Brush Size</div>
<svg style="left:746.6px;top:307.2px" width="20" height="9" viewBox="0 0 20 9"><g fill="none" stroke="#111" stroke-width="1"><rect x="0.500" y="3" width="4.200" height="4.500"/><path d="M2.200 3v-2h4.300v4.300h-1.800"/><path d="M12.500 1.500l5.500 5.500M18 1.500l-5.500 5.500" stroke-width="1.100"/></g></svg>
<div class="a" style="left:598.3px;top:321.5px;width:30px;height:38.500px;background:#fff"></div><div class="t" style="left:598.3px;top:351.7px;width:30px;text-align:center;font-size:7.500px;line-height:8px;color:#222">0.5</div>
<div class="a" style="left:630.2px;top:321.5px;width:30px;height:38.500px;background:#fff"></div><div class="t" style="left:630.2px;top:351.7px;width:30px;text-align:center;font-size:7.500px;line-height:8px;color:#222">0.7</div>
<div class="a" style="left:662.1px;top:321.5px;width:30px;height:38.500px;background:#fff"></div><div class="t" style="left:662.1px;top:351.7px;width:30px;text-align:center;font-size:7.500px;line-height:8px;color:#222">1</div><div class="a" style="left:676.25px;top:336.65px;width:0.7px;height:0.7px;border-radius:50%;background:#bbb"></div>
<div class="a" style="left:694.0px;top:321.5px;width:30px;height:38.500px;background:#fff"></div><div class="t" style="left:694.0px;top:351.7px;width:30px;text-align:center;font-size:7.500px;line-height:8px;color:#222">1.5</div><div class="a" style="left:708.00px;top:336.50px;width:1.0px;height:1.0px;border-radius:50%;background:#bbb"></div>
<div class="a" style="left:598.3px;top:361.8px;width:30px;height:41px;background:#fff"></div><div class="t" style="left:598.3px;top:392.0px;width:30px;text-align:center;font-size:7.500px;line-height:8px;color:#222">2</div><div class="a" style="left:612.10px;top:376.60px;width:1.4px;height:1.4px;border-radius:50%;background:#111"></div>
<div class="a" style="left:630.2px;top:361.8px;width:30px;height:41px;background:#fff"></div><div class="t" style="left:630.2px;top:392.0px;width:30px;text-align:center;font-size:7.500px;line-height:8px;color:#222">3</div><div class="a" style="left:643.70px;top:376.30px;width:2px;height:2px;border-radius:50%;background:#111"></div>
<div class="a" style="left:662.1px;top:361.8px;width:30px;height:41px;background:#fff"></div><div class="t" style="left:662.1px;top:392.0px;width:30px;text-align:center;font-size:7.500px;line-height:8px;color:#222">4</div><div class="a" style="left:675.10px;top:375.80px;width:3.0px;height:3.0px;border-radius:50%;background:#111"></div>
<div class="a" style="left:694.0px;top:361.8px;width:30px;height:41px;background:#fff"></div><div class="t" style="left:694.0px;top:392.0px;width:30px;text-align:center;font-size:7.500px;line-height:8px;color:#222">5</div><div class="a" style="left:706.60px;top:375.40px;width:3.8px;height:3.8px;border-radius:50%;background:#111"></div>

<div class="a" style="left:755.100px;top:334.200px;width:13.700px;height:33px;background:#cdcdcd"></div>
<svg style="left:752px;top:320px" width="18" height="14" viewBox="752 320 18 14"><path d="M758.200 329.500l3.200-3.200l3.200 3.200" fill="none" stroke="#333" stroke-width="1.100"/></svg>
<!-- RIGHT-PANELS -->

<div class="a" id="taskbar" style="left:0;top:402.300px;width:770px;height:32px;background:#0e0e0e"></div>
<div class="a" style="left:355.500px;top:402.300px;width:39px;height:32px;background:#2f2f2f"></div>
<svg style="left:0;top:402px" width="770" height="32" viewBox="0 402 770 32">
 <!-- pink underlines -->
 <g fill="#e48ee6"><rect x="162.500" y="432.400" width="31" height="2"/><rect x="241" y="432.400" width="31" height="2"/><rect x="280" y="432.400" width="31.500" height="2"/><rect x="319.500" y="432.400" width="31" height="2"/><rect x="355.500" y="432.400" width="39" height="2"/></g>
 <!-- windows -->
 <g fill="#fff"><path d="M13 413l5.500-0.800v5h-5.500zM19.300 412.100l6.700-1v6.100h-6.700zM13 418h5.500v5l-5.500-0.800zM19.300 418h6.700v6.100l-6.700-1z"/></g>
 <!-- edge -->
 <path d="M52.500 416.500q1-7 8-7q7 0 7.500 7.500v1.800h-10.500q0.500 3 4.500 3q3 0 5.500-1.200v3.200q-2.500 1.400-6 1.400q-7-0.200-7.500-6.500q0.500-3.500 3.500-5q-1.200 1.300-1.500 3h6.500q-0.300-3.300-3.800-3.300q-4 0.200-6.200 3.100z" fill="#1f7ae0"/>
 <!-- store -->
 <path d="M90 412.500h17.500v11q0 1.500-1.500 1.500h-14.500q-1.500 0-1.500-1.500z" fill="#f4f4f4"/>
 <path d="M95 412.500q0-4 3.700-4q3.800 0 3.800 4" fill="none" stroke="#ddd" stroke-width="1.100"/>
 <rect x="94.500" y="414.800" width="3.600" height="3.600" fill="#f25022"/><rect x="99" y="414.800" width="3.600" height="3.600" fill="#7fba00"/><rect x="94.500" y="419.300" width="3.600" height="3.600" fill="#00a4ef"/><rect x="99" y="419.300" width="3.600" height="3.600" fill="#ffb900"/>
 <!-- explorer -->
 <path d="M130 411h6l1.500 1.500h10v11.500h-17.500z" fill="#f3c94c"/><path d="M130 413.500h17.500v10.500h-17.500z" fill="#fbe18a"/>
 <path d="M133 417.500h11.500v6.500h-3v-2.500h-5.500v2.500h-3z" fill="#3f9be8"/>
 <!-- chrome -->
 <circle cx="178" cy="417.600" r="9" fill="#dd4b3e"/>
 <path d="M178 417.600l-7.800 4.500a9 9 0 0 0 7.800 4.500l4.500-7.800z" fill="#1ea362"/>
 <path d="M178 417.600l4.500 1.200l-4.500 7.800a9 9 0 0 0 7.800-13.500h-9z" fill="#fdd53f"/>
 <path d="M170.200 413.100a9 9 0 0 1 15.600 0h-7.800l-3.900 6.800z" fill="#dd4b3e"/>
 <circle cx="178" cy="417.600" r="4.100" fill="#f1f1f1"/><circle cx="178" cy="417.600" r="3.200" fill="#4a8af4"/>
 <!-- telegram -->
 <circle cx="217" cy="417.600" r="8.700" fill="#2e9fd9"/>
 <path d="M211.500 417.500l10.500-4.200l-1.800 8.800l-3-2.200l-1.600 1.600l0.300-2.600l4.400-4l-5.600 3.500z" fill="#fff"/>
 <!-- discord -->
 <path d="M250.500 410.500h12.500q1.500 0 1.500 1.500v13.500l-3-2.800h-11q-1.500 0-1.500-1.500v-9.200q0-1.500 1.500-1.500z" fill="#7a8fdb"/>
 <path d="M252 420.500q0-4.500 1.800-6.300q1.500-0.900 3-0.900h0q1.500 0 3 0.900q1.800 1.800 1.800 6.300q-1.500 1.200-3 1.200l-0.700-1h-2.200l-0.700 1q-1.500 0-3-1.200z" fill="#fff"/>
 <ellipse cx="254.900" cy="418.200" rx="1" ry="1.200" fill="#7a8fdb"/><ellipse cx="258.700" cy="418.200" rx="1" ry="1.200" fill="#7a8fdb"/>
 <!-- blue plane -->
 <circle cx="296" cy="417.600" r="9.500" fill="#2aa9e0"/>
 <path d="M291 411.500l11 6.500l-5 1.300l2.500 4.700l-2 1l-2.500-4.800l-3.500 3z" fill="#fff"/>
 <!-- red app -->
 <circle cx="335" cy="417.600" r="9.500" fill="#c9222c"/>
 <path d="M329.500 413.500h4.500v8h-4.500M330.500 417.500h3.500M336 421.500l5-9" fill="none" stroke="#fff" stroke-width="1.300"/>
 <circle cx="341" cy="423" r="3.600" fill="#3aa655" stroke="#eee" stroke-width="0.600"/><path d="M339.300 423l1.300 1.300l2.200-2.500" fill="none" stroke="#fff" stroke-width="0.900"/>
 <!-- alpaca -->
 <circle cx="374.500" cy="417.600" r="9" fill="#111"/>
 <path d="M366 417a8.500 8.500 0 0 0 5 8.500q-2-3-1.500-6q-1 1-1.500 3q-1.500-3 0-6.500q-1.500 0.500-2 1zM383 417a8.500 8.500 0 0 1-5 8.500q2-3 1.500-6q1 1 1.500 3q1.500-3 0-6.500q1.500 0.500 2 1z" fill="#f26a1b"/>
 <path d="M371.200 409.500l0.800 2.200q2.500-1.200 5 0l0.800-2.200l0.800 3.500q0.800 2 0 4.500l0.400 7q-4.500 2.200-9 0l0.400-7q-0.800-2.500 0-4.500z" fill="#f4f0ea"/>
 <circle cx="372.800" cy="415" r="0.600" fill="#222"/><circle cx="376.200" cy="415" r="0.600" fill="#222"/>
 <rect x="373" y="419" width="3" height="2.200" fill="#c55a1e"/>
 <!-- tray -->
 <path d="M630 420l4-4l4 4" fill="none" stroke="#fff" stroke-width="1.100"/>
 <path d="M736.700 412.200h11.500v8.500h-7.500l-2.500 2.300v-2.300h-1.500z" fill="none" stroke="#fff" stroke-width="1"/>
 <path d="M738.700 414.700h7.500M738.700 416.700h7.500M738.700 418.700h5" stroke="#fff" stroke-width="0.700"/>
 <circle cx="748.200" cy="421.700" r="2.300" fill="#0e0e0e" stroke="#fff" stroke-width="0.700"/>
</svg>
<div class="t" style="left:652px;top:413px;font-size:8.300px;color:#fff">ENG</div>
<div class="t" style="left:684.500px;top:405.700px;font-size:8.950px;color:#fff">2:17 PM</div>
<div class="t" style="left:681px;top:419.200px;font-size:9.300px;color:#fff">5/21/2019</div>
<div class="a" style="left:765.500px;top:402.300px;width:0.700px;height:32px;background:#666"></div>
<!-- TASKBAR -->
</body></html>
